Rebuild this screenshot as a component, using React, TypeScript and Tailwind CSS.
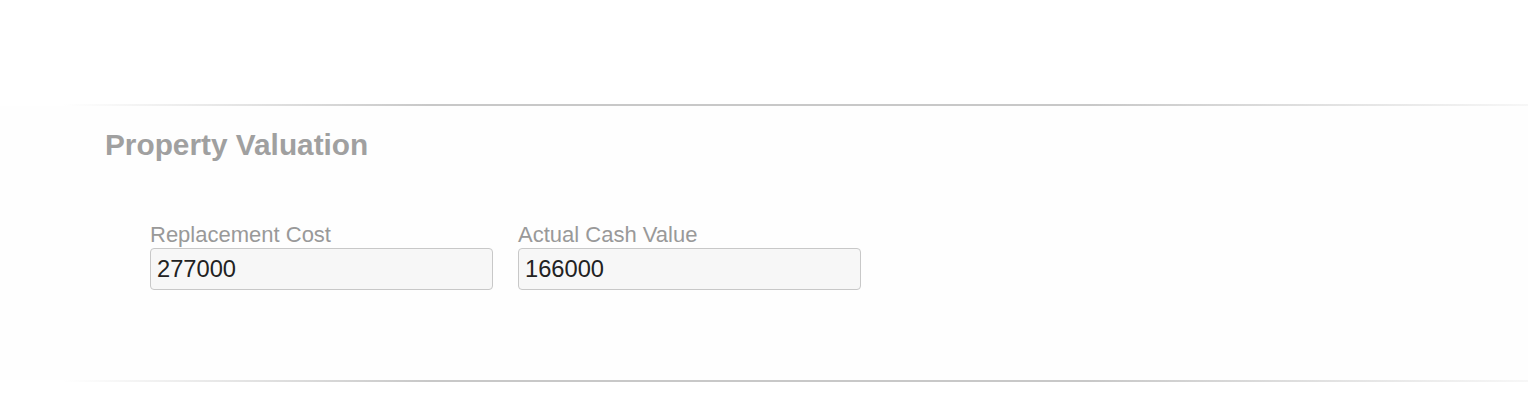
import React from "react";

const Line = () => (
  <div className="h-[2px] ml-[62px] bg-[linear-gradient(to_right,rgba(200,200,200,0),#c8c8c8_25%,#c8c8c8_70%,rgba(200,200,200,0.15))]" />
);

function Field({ label, value }: { label: string; value: string }) {
  return (
    <div className="flex flex-col w-[343px]">
      <label className="text-[22px] leading-none text-[#999999] h-[22px] mb-[2px]">{label}</label>
      <input
        readOnly
        value={value}
        className="h-[42px] w-full rounded-[4px] border border-[#c8c8c8] bg-[#f7f7f7] pl-[6px] text-[23.7px] text-[#222222] outline-none"
        style={{ fontFamily: '"Liberation Sans", Arial, sans-serif' }}
      />
    </div>
  );
}

export default function App() {
  return (
    <div
      className="w-[1528px] h-[406px] bg-white overflow-hidden"
      style={{ fontFamily: '"Liberation Sans", Arial, sans-serif' }}
    >
      <div className="h-[104px]" />
      <Line />
      <div className="bg-[#fefefe]">
        <div className="pt-[24px] pl-[105px]">
          <h2 className="text-[29.8px] leading-none font-bold text-[#a0a0a0] h-[29px]">Property Valuation</h2>
        </div>
        <div className="flex gap-[25px] pl-[150px] pt-[65px] pb-[90px]">
          <Field label="Replacement Cost" value="277000" />
          <Field label="Actual Cash Value" value="166000" />
        </div>
      </div>
      <Line />
    </div>
  );
}
